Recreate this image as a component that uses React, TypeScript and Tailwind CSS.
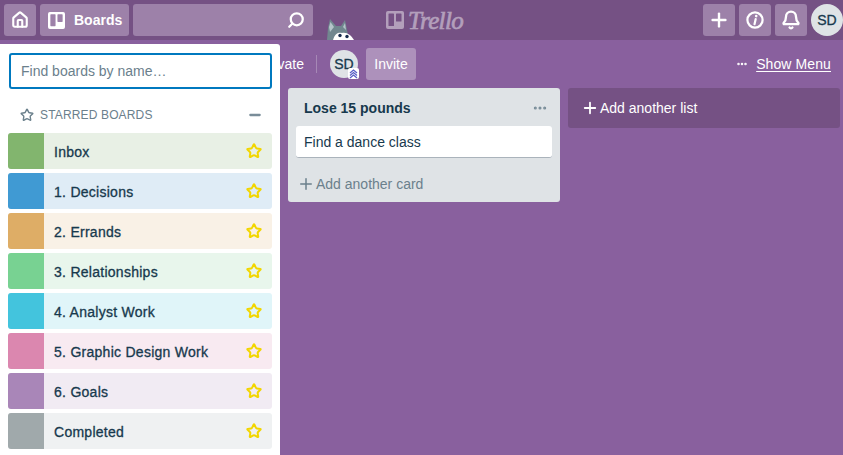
import React from "react";
import { Plus, Search, Bell, Home, Minus, Star, MoreHorizontal } from "lucide-react";

const boards = [
  { name: "Inbox", a: "bg-[#82b56e]", b: "bg-[#e8f0e5]" },
  { name: "1. Decisions", a: "bg-[#409ad3]", b: "bg-[#dfecf6]" },
  { name: "2. Errands", a: "bg-[#dead66]", b: "bg-[#f9f1e6]" },
  { name: "3. Relationships", a: "bg-[#78d292]", b: "bg-[#e8f6ec]" },
  { name: "4. Analyst Work", a: "bg-[#43c4dd]", b: "bg-[#e0f5f9]" },
  { name: "5. Graphic Design Work", a: "bg-[#db87af]", b: "bg-[#f8eaf1]" },
  { name: "6. Goals", a: "bg-[#a986b8]", b: "bg-[#f1ebf3]" },
  { name: "Completed", a: "bg-[#a0a9ab]", b: "bg-[#eff1f2]" },
];

function TrelloMark({ size, color, bar }: { size: number; color: string; bar: string }) {
  return (
    <svg width={size} height={size} viewBox="0 0 18 18">
      <rect width="18" height="18" rx="2" fill={color} />
      <rect x="2.5" y="2.5" width="5.5" height="12.5" rx="0.6" fill={bar} />
      <rect x="10" y="2.5" width="5.5" height="8" rx="0.6" fill={bar} />
    </svg>
  );
}

function Mascot() {
  return (
    <svg width="30" height="22" viewBox="0 0 30 22">
      <path d="M2 22 L3 10 L5 1 L11 8 L16 8 L20 2 L22 12 L24 22 Z" fill="#71878f" />
      <path d="M4 9 L5.5 4 L9 9 L5 14 Z" fill="#b4c4c9" />
      <path d="M18 9 L20 5 L21 12 Z" fill="#b4c4c9" />
      <path d="M8 22 C10 15 14 14 17 15 C22 14 26 17 29 22 Z" fill="#ffffff" />
      <circle cx="15" cy="17.5" r="1.7" fill="#172b4d" />
      <circle cx="22" cy="18.5" r="1.7" fill="#172b4d" />
    </svg>
  );
}

export default function App() {
  return (
    <div className="relative h-[455px] w-[843px] overflow-hidden bg-[#89609e] font-['Liberation_Sans',Arial,sans-serif] text-[14px] text-[#17394d]">
      <header className="flex h-10 items-center bg-[#755184] pl-1">
        <button className="flex h-8 w-8 items-center justify-center rounded-[3px] bg-[#9d81a9] text-white">
          <Home size={18} strokeWidth={2.8} />
        </button>
        <button className="ml-1 flex h-8 w-[89px] items-center rounded-[3px] bg-[#9d81a9] pl-2 text-white">
          <TrelloMark size={17} color="#ffffff" bar="#9d81a9" />
          <span className="ml-[9px] text-[14px] font-bold">Boards</span>
        </button>
        <div className="ml-1 flex h-8 w-[180px] items-center justify-end rounded-[3px] bg-[#9d81a9] pr-2 text-white">
          <Search size={18} strokeWidth={3} className="-scale-x-100" />
        </div>
        <div className="ml-3 self-end">
          <Mascot />
        </div>
        <div className="ml-[31px] flex items-center gap-[4px] opacity-45">
          <TrelloMark size={18} color="#ffffff" bar="#755184" />
          <span className="font-['Liberation_Serif',serif] text-[25px] leading-none tracking-[-0.6px] text-white italic [-webkit-text-stroke:0.6px_#ffffff]">Trello</span>
        </div>
        <div className="ml-auto flex items-center gap-1">
          <button className="flex h-8 w-8 items-center justify-center rounded-[3px] bg-[#9d81a9] text-white">
            <Plus size={22} strokeWidth={2.6} />
          </button>
          <button className="flex h-8 w-8 items-center justify-center rounded-[3px] bg-[#9d81a9] text-white">
            <svg width="20" height="20" viewBox="0 0 20 20" fill="none">
              <circle cx="10" cy="10" r="7.6" stroke="#fff" strokeWidth="2.2" />
              <path d="M10.7 9 L9.5 14.2" stroke="#fff" strokeWidth="2.2" strokeLinecap="round" />
              <circle cx="11.2" cy="6.1" r="1.3" fill="#fff" />
            </svg>
          </button>
          <button className="flex h-8 w-8 items-center justify-center rounded-[3px] bg-[#9d81a9] text-white">
            <Bell size={20} strokeWidth={2.8} />
          </button>
          <div className="flex h-8 w-8 items-center justify-center rounded-full bg-[#dfe3e6] text-[14px] [-webkit-text-stroke:0.3px_#17394d]">SD</div>
        </div>
      </header>

      <div className="flex h-12 items-center pr-3 text-white">
        <div className="w-[304px] shrink-0 text-right">Private</div>
        <div className="ml-3 h-[18px] w-px bg-white/25" />
        <div className="relative ml-[13px] flex h-7 w-7 items-center justify-center rounded-full bg-[#dfe3e6] text-[#17394d] [-webkit-text-stroke:0.3px_#17394d]">
          SD
          <svg className="absolute -right-px -bottom-px rounded-[2px] bg-white" width="11" height="11" viewBox="0 0 11 11" fill="none" stroke="#5a5fc7" strokeWidth="1.3">
            <path d="M2 5 L5.5 2 L9 5 M2 7.5 L5.5 4.5 L9 7.5 M2 10 L5.5 7 L9 10" />
          </svg>
        </div>
        <div className="ml-2 flex h-8 w-[50px] items-center justify-center rounded-[3px] bg-[#ad91bb]">Invite</div>
        <div className="ml-auto flex items-center">
          <MoreHorizontal size={12} strokeWidth={3} />
          <span className="ml-2 tracking-[0.1px] underline underline-offset-2">Show Menu</span>
        </div>
      </div>

      <div className="flex items-start pl-[288px]">
        <section className="w-[272px] rounded-[3px] bg-[#dfe3e6]">
          <div className="flex h-[38px] items-center justify-between pt-[2px] pr-3 pl-4">
            <h2 className="text-[14px] font-bold">Lose 15 pounds</h2>
            <MoreHorizontal size={16} className="text-[#798d99]" strokeWidth={2.6} />
          </div>
          <div className="mx-2 flex h-8 items-center rounded-[3px] border-b border-[#aab3bb] bg-white px-2 pt-px">Find a dance class</div>
          <div className="flex h-[44px] items-center pt-2 pl-[9px] text-[#6b808c]">
            <Plus size={18} strokeWidth={2} />
            <span className="ml-px">Add another card</span>
          </div>
        </section>
        <div className="ml-2 flex h-10 w-[272px] items-center rounded-[3px] bg-[#755184] pl-[13px] text-white">
          <Plus size={18} strokeWidth={2.4} />
          <span className="ml-px">Add another list</span>
        </div>
      </div>

      <aside className="absolute top-11 left-0 flex h-[411px] w-[280px] flex-col rounded-tr-[3px] bg-white px-2 pt-[9px]">
        <div className="ml-px flex h-9 w-[263px] items-center rounded-[3px] border-2 border-[#0079bf] px-[10px] text-[#6b808c]">Find boards by name…</div>
        <div className="mt-3 flex h-7 items-center pl-3 text-[12px] tracking-[0.15px] text-[#6b808c]">
          <Star size={14} strokeWidth={2.4} />
          <span className="ml-[6px]">STARRED BOARDS</span>
          <Minus size={16} strokeWidth={3.4} className="mr-[9px] ml-auto text-[#798d99]" />
        </div>
        <div className="mt-1 flex flex-col gap-1">
          {boards.map((b) => (
            <div key={b.name} className={`flex h-9 w-[264px] items-center overflow-hidden rounded-[3px] ${b.b}`}>
              <div className={`h-full w-9 ${b.a}`} />
              <span className="ml-[10px] pt-[2px] text-[14px] font-medium tracking-[0.27px] [-webkit-text-stroke:0.3px_#17394d]">{b.name}</span>
              <Star size={16} strokeWidth={3} className="mr-[10px] ml-auto text-[#f2d600]" />
            </div>
          ))}
        </div>
      </aside>
    </div>
  );
}
